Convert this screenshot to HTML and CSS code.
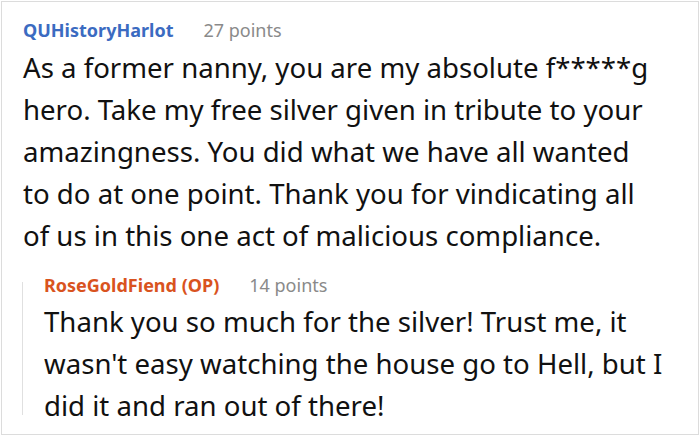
FILE: index.html
```html
<!DOCTYPE html>
<html>
<head>
<meta charset="utf-8">
<link rel="stylesheet" href="styles.css">
</head>
<body>
<div class="card">
  <div class="comment">
    <div class="meta"><span class="user">QUHistoryHarlot</span><span class="points">27 points</span></div>
    <p class="text">As a former nanny, you are my absolute f*****g hero. Take my free silver given in tribute to your amazingness. You did what we have all wanted to do at one point. Thank you for vindicating all of us in this one act of malicious compliance.</p>
  </div>
  <div class="reply">
    <div class="thread"></div>
    <div class="reply-body">
      <div class="meta"><span class="user op">RoseGoldFiend (OP)</span><span class="points">14 points</span></div>
      <p class="text">Thank you so much for the silver! Trust me, it wasn't easy watching the house go to Hell, but I did it and ran out of there!</p>
    </div>
  </div>
</div>
</body>
</html>
```
FILE: styles.css
```css
html, body { margin: 0; padding: 0; background: #fff; }
body { font-family: "Noto Sans", "Open Sans", sans-serif; color: #111; }
.card {
  margin: 1px 0 0 1px;
  width: 698px;
  height: 434px;
  border: 1px solid #dcdcdc;
  box-sizing: border-box;
  padding: 16px 0 0 21px;
}
.meta { display: flex; align-items: baseline; gap: 30px; height: 24px; line-height: 24px; margin-bottom: 4px; }
.user { font-size: 18px; font-weight: 700; color: #3b6bc1; }
.user.op { color: #d9531e; }
.points { font-size: 18px; color: #8a8a8a; }
.text { margin: 0; font-size: 27.6px; line-height: 42px; }
.comment .text { width: 636px; }
.reply { display: flex; margin: 17px 0 0 -1px; }
.thread { width: 1px; background: #e0e0e0; margin: 9px 0 11px; }
.reply-body { margin-left: 21px; }
.reply-body .meta { margin-bottom: 3px; }
.reply-body .text { width: 640px; }
```
